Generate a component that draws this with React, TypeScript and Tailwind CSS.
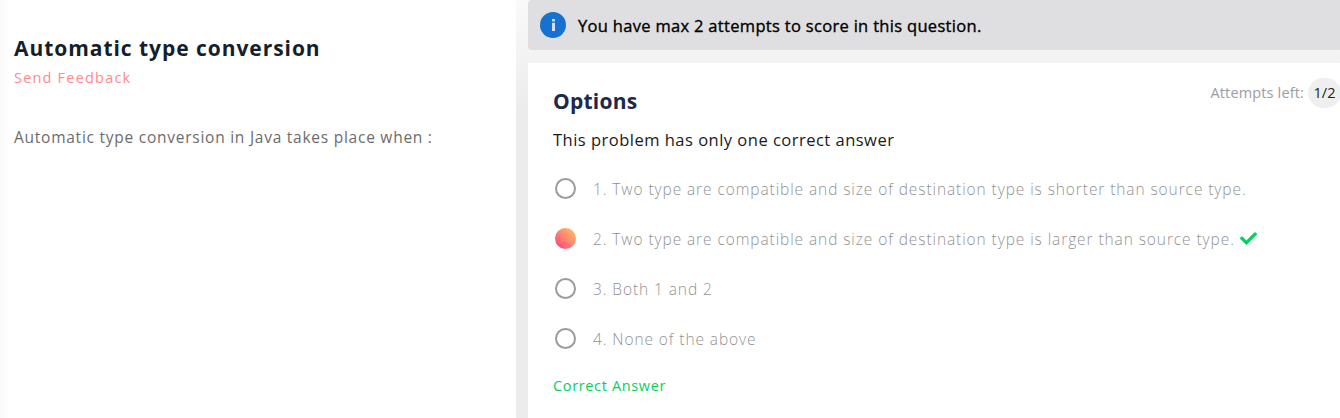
import { FaCheck } from "react-icons/fa";

function Radio({ selected }: { selected?: boolean }) {
  return selected ? (
    <span className="size-[21px] shrink-0 rounded-full bg-linear-45 from-[#fb2379] to-[#fcc65d]" />
  ) : (
    <span className="size-[21px] shrink-0 rounded-full border-2 border-[#9b9b9b]" />
  );
}

const options = [
  { text: "1. Two type are compatible and size of destination type is shorter than source type.", correct: false },
  { text: "2. Two type are compatible and size of destination type is larger than source type.", correct: true },
  { text: "3. Both 1 and 2", correct: false },
  { text: "4. None of the above", correct: false },
];

export default function App() {
  return (
    <div className="flex h-[418px] w-[1340px] overflow-hidden bg-[#ececec] font-['Open_Sans',sans-serif] whitespace-nowrap">
      <section className="w-[516px] shrink-0 bg-linear-to-r from-[#fafafa] to-white to-[10px] pl-[14px] pt-[32px]">
        <h1 className="text-[21px] font-bold leading-8 tracking-[0.95px] text-[#141e2d]">Automatic type conversion</h1>
        <div className="text-[14.5px] leading-7 tracking-[1.2px] text-[#ff8a8f]">Send Feedback</div>
        <p className="mt-[31px] text-[15.5px] leading-7 tracking-[0.75px] text-[#6c6c6c]">
          Automatic type conversion in Java takes place when :
        </p>
      </section>
      <main className="flex grow flex-col bg-linear-to-b from-[#fafafa] to-[#ececec] to-[110px] pl-3">
        <div className="flex h-[50px] items-center rounded-bl-[4px] rounded-tl-[4px] bg-[#dfdfe1] pl-3">
          <span className="flex size-[26px] items-center justify-center rounded-full bg-[#1671d3]">
            <svg viewBox="0 0 26 26" className="size-[26px]" fill="#d5def0">
              <rect x="12" y="7" width="3" height="2.4" />
              <rect x="12" y="10.8" width="3" height="8.2" />
            </svg>
          </span>
          <span className="ml-3 pt-[2px] text-[16.5px] font-medium tracking-[0.31px] text-black [-webkit-text-stroke:0.35px_black]">
            You have max 2 attempts to score in this question.
          </span>
        </div>
        <div className="mt-[13px] grow bg-white pl-[25px]">
          <div className="flex items-start justify-between">
            <h2 className="mt-[22px] text-[21px] font-bold leading-8 tracking-[0.25px] text-[#20284a]">Options</h2>
            <div className="mt-[15px] flex items-center text-[14.5px] text-[#9c9ca5]">
              <span className="tracking-[0.15px]">Attempts left:</span>
              <span className="-mr-px ml-1 flex h-[30px] w-[33px] items-center justify-center rounded-full bg-[#efefef] text-[#222]">
                1/2
              </span>
            </div>
          </div>
          <p className="mt-[9px] text-[16.5px] leading-7 tracking-[0.49px] text-[#1a1a1a]">
            This problem has only one correct answer
          </p>
          <div className="mt-[9px] pl-[2px]">
            {options.map((o) => (
              <div
                key={o.text}
                className="flex h-[50px] items-center text-[15.5px] font-light tracking-[0.91px]"
              >
                <Radio selected={o.correct} />
                <span className="ml-[17px] pt-[3px] text-black opacity-45">{o.text}</span>
                {o.correct && <FaCheck className="ml-[5px] size-[17px] text-[#06cf5f]" />}
              </div>
            ))}
          </div>
          <p className="mt-[11px] text-[14.5px] font-medium leading-6 tracking-[0.65px] text-[#06cf5f]">Correct Answer</p>
        </div>
      </main>
    </div>
  );
}
